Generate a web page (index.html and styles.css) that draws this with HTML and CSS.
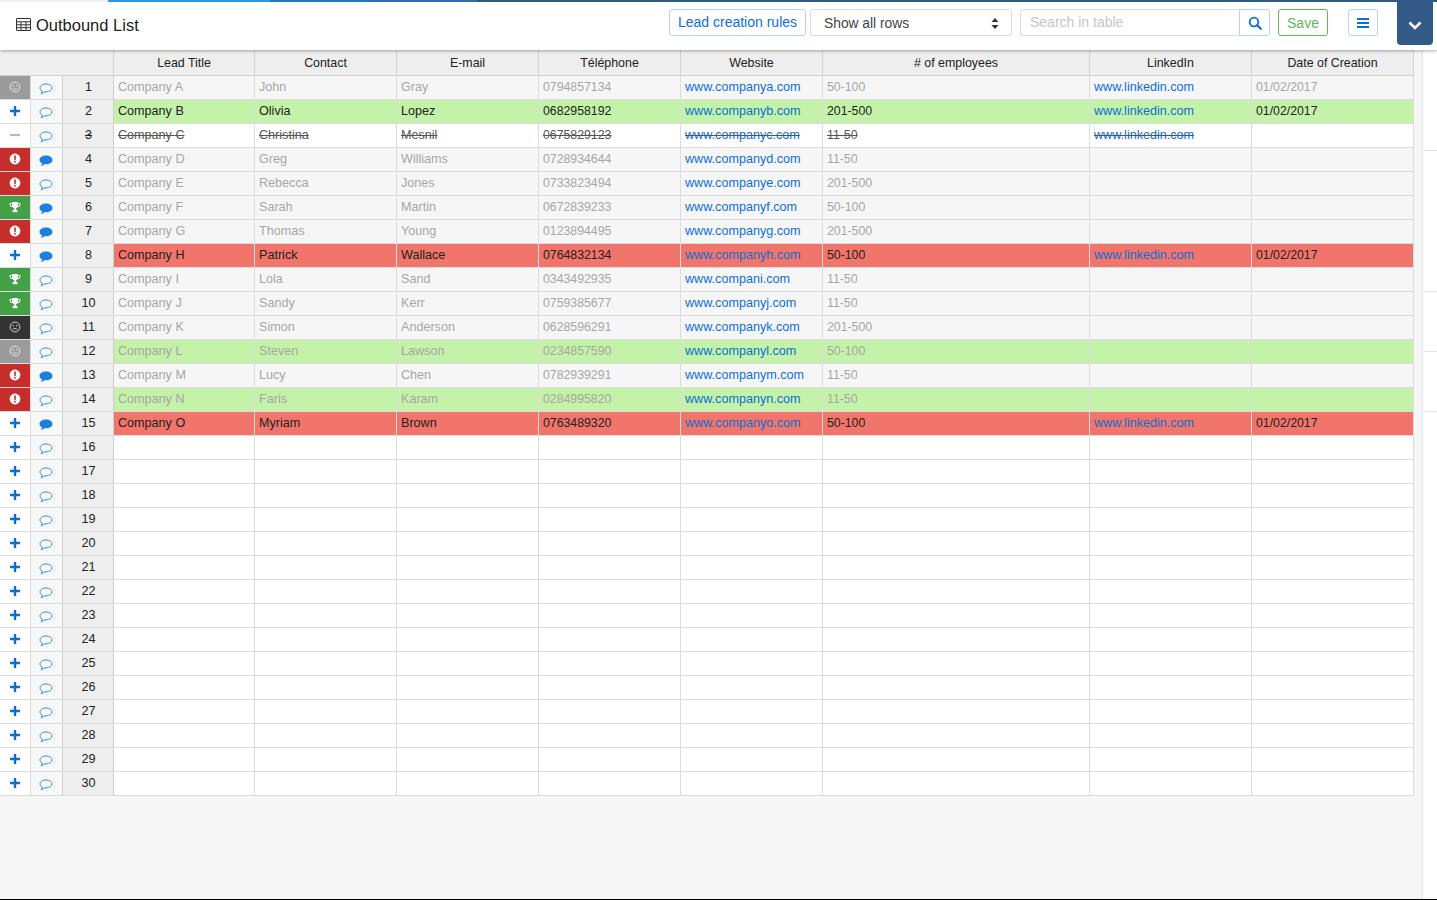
FILE: index.html
```html
<!DOCTYPE html>
<html lang="en">
<head>
<meta charset="utf-8">
<title>Outbound List</title>
<link rel="stylesheet" href="styles.css">
</head>
<body>
<svg class="defs" width="0" height="0" aria-hidden="true">
  <symbol id="i-smile" viewBox="0 0 12 12"><circle cx="6" cy="6" r="4.9" fill="none" stroke="currentColor" stroke-width="1"/><circle cx="4.2" cy="4.7" r=".8" fill="currentColor"/><circle cx="7.8" cy="4.7" r=".8" fill="currentColor"/><path d="M3.6 7.3c.9 1.4 3.9 1.4 4.8 0" fill="none" stroke="currentColor"/></symbol>
  <symbol id="i-frown" viewBox="0 0 12 12"><circle cx="6" cy="6" r="4.9" fill="none" stroke="currentColor" stroke-width="1"/><circle cx="4.2" cy="4.7" r=".8" fill="currentColor"/><circle cx="7.8" cy="4.7" r=".8" fill="currentColor"/><path d="M3.6 8.6c.9-1.4 3.9-1.4 4.8 0" fill="none" stroke="currentColor"/></symbol>
  <symbol id="i-alert" viewBox="0 0 12 12"><path fill-rule="evenodd" d="M6 .6a5.4 5.4 0 1 1 0 10.8A5.4 5.4 0 0 1 6 .6zM5.100 2.400l.2 4.900h1.400l.2-4.900zM5.200 8.100v1.500h1.600V8.100z" fill="currentColor"/></symbol>
  <symbol id="i-trophy" viewBox="0 0 12 12"><path d="M3 1h6v1h2.4v1.4c0 1.5-1.2 2.6-3 2.8-.4.6-1 1-1.5 1.2v1.4h1.4V10H4.200V8.400h1.400V7.400C5 7.200 4.400 6.800 4 6.200 1.900 6 .6 4.900.6 3.400V2H3zM1.600 3v.4c0 .9.7 1.600 1.800 1.800C3.200 4.500 3.100 3.800 3 3zM9 3c-.1.8-.2 1.500-.4 2.200 1.100-.2 1.800-.9 1.800-1.800V3z" fill="currentColor"/><rect x="3.500" y="9.800" width="5" height="1.400" fill="currentColor"/></symbol>
  <symbol id="i-plus" viewBox="0 0 10 10"><path d="M3.800 0h2.400v3.800H10v2.400H6.200V10H3.800V6.200H0V3.800h3.800z" fill="currentColor"/></symbol>
  <symbol id="i-minus" viewBox="0 0 10 10"><rect y="3.900" width="10" height="2.200" fill="currentColor"/></symbol>
  <symbol id="i-chat" viewBox="0 0 14 12"><path d="M7 1C3.700 1 1 2.700 1 4.900c0 1.300.9 2.400 2.300 3.100-.1.900-.6 1.900-1.100 2.600 1.300-.2 2.700-1 3.500-1.900.4.100.9.100 1.300.100 3.300 0 6-1.700 6-3.900S10.300 1 7 1z" fill="none" stroke="currentColor" stroke-width=".9"/></symbol>
  <symbol id="i-chatf" viewBox="0 0 14 12"><path d="M7 .6C3.400.6.500 2.500.5 4.900c0 1.400 1 2.600 2.500 3.400-.1 1-.6 1.900-1.200 2.800 1.500-.2 2.900-1 3.900-2 .4 0 .9.100 1.300.100 3.600 0 6.500-1.900 6.500-4.300S10.600.6 7 .6z" fill="currentColor"/></symbol>
</svg>

<header class="header">
  <div class="strip"><i class="s0"></i><i class="s1"></i><i class="s2"></i><i class="s3"></i><i class="s4"></i></div>
  <div class="bar">
    <h1 class="title"><svg class="grid-icon" viewBox="0 0 15 13" aria-hidden="true"><path d="M1 .5h13a.5.5 0 0 1 .5.5v11a.5.5 0 0 1-.5.5H1a.5.5 0 0 1-.5-.5V1A.5.5 0 0 1 1 .5zM.5 3.800h14M.5 6.800h14M.5 9.700h14M5 3.800v8.700M10 3.800v8.700" fill="none" stroke="currentColor"/></svg>Outbound List</h1>
    <div class="tools">
      <a class="btn btn-blue btn-rules">Lead creation rules</a>
      <div class="select"><span>Show all rows</span><svg class="updown" viewBox="0 0 8 11" aria-hidden="true"><path d="M4 0l3.500 4H.5zM4 11L.5 7h7z" fill="currentColor"/></svg></div>
      <div class="search">
        <input class="search-input" type="text" placeholder="Search in table">
        <a class="search-btn"><svg viewBox="0 0 14 14" aria-hidden="true"><circle cx="6" cy="6" r="4.300" fill="none" stroke="currentColor" stroke-width="1.800"/><path d="M9.200 9.200l3.600 3.600" stroke="currentColor" stroke-width="2.200" stroke-linecap="round"/></svg></a>
      </div>
      <a class="btn btn-save">Save</a>
      <a class="btn btn-blue btn-menu"><svg viewBox="0 0 12 10" aria-hidden="true"><path d="M0 0h12v2H0zM0 4h12v2H0zM0 8h12v2H0z" fill="currentColor"/></svg></a>
    </div>
  </div>
  <a class="tab"><svg viewBox="0 0 14 9" aria-hidden="true"><path d="M1.500 1.500L7 7l5.500-5.500" fill="none" stroke="currentColor" stroke-width="2.600"/></svg></a>
</header>

<div class="main">
  <div class="content">
    <table class="sheet">
      <colgroup><col class="c-status"><col class="c-note"><col class="c-num"><col class="c-std1"><col class="c-std"><col class="c-std"><col class="c-std"><col class="c-std"><col class="c-emp"><col class="c-wide"><col class="c-wide"></colgroup>
      <thead><tr><th></th><th></th><th class="th-num"></th><th>Lead Title</th><th>Contact</th><th>E-mail</th><th>Téléphone</th><th>Website</th><th># of employees</th><th>LinkedIn</th><th>Date of Creation</th></tr></thead>
      <tbody>
        <tr class="muted"><td class="st st-gray"><svg class="ic"><use href="#i-smile"/></svg></td><td class="nt"><svg class="cm"><use href="#i-chat"/></svg></td><td class="num">1</td><td>Company A</td><td>John</td><td>Gray</td><td>0794857134</td><td><a>www.companya.com</a></td><td>50-100</td><td><a>www.linkedin.com</a></td><td>01/02/2017</td></tr>
        <tr class="green"><td class="st st-add"><svg class="ic-s"><use href="#i-plus"/></svg></td><td class="nt"><svg class="cm"><use href="#i-chat"/></svg></td><td class="num">2</td><td>Company B</td><td>Olivia</td><td>Lopez</td><td>0682958192</td><td><a>www.companyb.com</a></td><td>201-500</td><td><a>www.linkedin.com</a></td><td>01/02/2017</td></tr>
        <tr class="struck"><td class="st st-del"><svg class="ic-s"><use href="#i-minus"/></svg></td><td class="nt"><svg class="cm"><use href="#i-chat"/></svg></td><td class="num">3</td><td>Company C</td><td>Christina</td><td>Mesnil</td><td>0675829123</td><td><a>www.companyc.com</a></td><td>11-50</td><td><a>www.linkedin.com</a></td><td></td></tr>
        <tr class="muted"><td class="st st-red"><svg class="ic"><use href="#i-alert"/></svg></td><td class="nt"><svg class="cm"><use href="#i-chatf"/></svg></td><td class="num">4</td><td>Company D</td><td>Greg</td><td>Williams</td><td>0728934644</td><td><a>www.companyd.com</a></td><td>11-50</td><td></td><td></td></tr>
        <tr class="muted"><td class="st st-red"><svg class="ic"><use href="#i-alert"/></svg></td><td class="nt"><svg class="cm"><use href="#i-chat"/></svg></td><td class="num">5</td><td>Company E</td><td>Rebecca</td><td>Jones</td><td>0733823494</td><td><a>www.companye.com</a></td><td>201-500</td><td></td><td></td></tr>
        <tr class="muted"><td class="st st-win"><svg class="ic"><use href="#i-trophy"/></svg></td><td class="nt"><svg class="cm"><use href="#i-chatf"/></svg></td><td class="num">6</td><td>Company F</td><td>Sarah</td><td>Martin</td><td>0672839233</td><td><a>www.companyf.com</a></td><td>50-100</td><td></td><td></td></tr>
        <tr class="muted"><td class="st st-red"><svg class="ic"><use href="#i-alert"/></svg></td><td class="nt"><svg class="cm"><use href="#i-chatf"/></svg></td><td class="num">7</td><td>Company G</td><td>Thomas</td><td>Young</td><td>0123894495</td><td><a>www.companyg.com</a></td><td>201-500</td><td></td><td></td></tr>
        <tr class="red"><td class="st st-add"><svg class="ic-s"><use href="#i-plus"/></svg></td><td class="nt"><svg class="cm"><use href="#i-chatf"/></svg></td><td class="num">8</td><td>Company H</td><td>Patrick</td><td>Wallace</td><td>0764832134</td><td><a>www.companyh.com</a></td><td>50-100</td><td><a>www.linkedin.com</a></td><td>01/02/2017</td></tr>
        <tr class="muted"><td class="st st-win"><svg class="ic"><use href="#i-trophy"/></svg></td><td class="nt"><svg class="cm"><use href="#i-chat"/></svg></td><td class="num">9</td><td>Company I</td><td>Lola</td><td>Sand</td><td>0343492935</td><td><a>www.compani.com</a></td><td>11-50</td><td></td><td></td></tr>
        <tr class="muted"><td class="st st-win"><svg class="ic"><use href="#i-trophy"/></svg></td><td class="nt"><svg class="cm"><use href="#i-chat"/></svg></td><td class="num">10</td><td>Company J</td><td>Sandy</td><td>Kerr</td><td>0759385677</td><td><a>www.companyj.com</a></td><td>11-50</td><td></td><td></td></tr>
        <tr class="muted"><td class="st st-dark"><svg class="ic"><use href="#i-frown"/></svg></td><td class="nt"><svg class="cm"><use href="#i-chat"/></svg></td><td class="num">11</td><td>Company K</td><td>Simon</td><td>Anderson</td><td>0628596291</td><td><a>www.companyk.com</a></td><td>201-500</td><td></td><td></td></tr>
        <tr class="muted green"><td class="st st-gray"><svg class="ic"><use href="#i-smile"/></svg></td><td class="nt"><svg class="cm"><use href="#i-chat"/></svg></td><td class="num">12</td><td>Company L</td><td>Steven</td><td>Lawson</td><td>0234857590</td><td><a>www.companyl.com</a></td><td>50-100</td><td></td><td></td></tr>
        <tr class="muted"><td class="st st-red"><svg class="ic"><use href="#i-alert"/></svg></td><td class="nt"><svg class="cm"><use href="#i-chatf"/></svg></td><td class="num">13</td><td>Company M</td><td>Lucy</td><td>Chen</td><td>0782939291</td><td><a>www.companym.com</a></td><td>11-50</td><td></td><td></td></tr>
        <tr class="muted green"><td class="st st-red"><svg class="ic"><use href="#i-alert"/></svg></td><td class="nt"><svg class="cm"><use href="#i-chat"/></svg></td><td class="num">14</td><td>Company N</td><td>Faris</td><td>Karam</td><td>0284995820</td><td><a>www.companyn.com</a></td><td>11-50</td><td></td><td></td></tr>
        <tr class="red"><td class="st st-add"><svg class="ic-s"><use href="#i-plus"/></svg></td><td class="nt"><svg class="cm"><use href="#i-chatf"/></svg></td><td class="num">15</td><td>Company O</td><td>Myriam</td><td>Brown</td><td>0763489320</td><td><a>www.companyo.com</a></td><td>50-100</td><td><a>www.linkedin.com</a></td><td>01/02/2017</td></tr>
        <tr class="empty"><td class="st st-add"><svg class="ic-s"><use href="#i-plus"/></svg></td><td class="nt"><svg class="cm"><use href="#i-chat"/></svg></td><td class="num">16</td><td></td><td></td><td></td><td></td><td></td><td></td><td></td><td></td></tr>
        <tr class="empty"><td class="st st-add"><svg class="ic-s"><use href="#i-plus"/></svg></td><td class="nt"><svg class="cm"><use href="#i-chat"/></svg></td><td class="num">17</td><td></td><td></td><td></td><td></td><td></td><td></td><td></td><td></td></tr>
        <tr class="empty"><td class="st st-add"><svg class="ic-s"><use href="#i-plus"/></svg></td><td class="nt"><svg class="cm"><use href="#i-chat"/></svg></td><td class="num">18</td><td></td><td></td><td></td><td></td><td></td><td></td><td></td><td></td></tr>
        <tr class="empty"><td class="st st-add"><svg class="ic-s"><use href="#i-plus"/></svg></td><td class="nt"><svg class="cm"><use href="#i-chat"/></svg></td><td class="num">19</td><td></td><td></td><td></td><td></td><td></td><td></td><td></td><td></td></tr>
        <tr class="empty"><td class="st st-add"><svg class="ic-s"><use href="#i-plus"/></svg></td><td class="nt"><svg class="cm"><use href="#i-chat"/></svg></td><td class="num">20</td><td></td><td></td><td></td><td></td><td></td><td></td><td></td><td></td></tr>
        <tr class="empty"><td class="st st-add"><svg class="ic-s"><use href="#i-plus"/></svg></td><td class="nt"><svg class="cm"><use href="#i-chat"/></svg></td><td class="num">21</td><td></td><td></td><td></td><td></td><td></td><td></td><td></td><td></td></tr>
        <tr class="empty"><td class="st st-add"><svg class="ic-s"><use href="#i-plus"/></svg></td><td class="nt"><svg class="cm"><use href="#i-chat"/></svg></td><td class="num">22</td><td></td><td></td><td></td><td></td><td></td><td></td><td></td><td></td></tr>
        <tr class="empty"><td class="st st-add"><svg class="ic-s"><use href="#i-plus"/></svg></td><td class="nt"><svg class="cm"><use href="#i-chat"/></svg></td><td class="num">23</td><td></td><td></td><td></td><td></td><td></td><td></td><td></td><td></td></tr>
        <tr class="empty"><td class="st st-add"><svg class="ic-s"><use href="#i-plus"/></svg></td><td class="nt"><svg class="cm"><use href="#i-chat"/></svg></td><td class="num">24</td><td></td><td></td><td></td><td></td><td></td><td></td><td></td><td></td></tr>
        <tr class="empty"><td class="st st-add"><svg class="ic-s"><use href="#i-plus"/></svg></td><td class="nt"><svg class="cm"><use href="#i-chat"/></svg></td><td class="num">25</td><td></td><td></td><td></td><td></td><td></td><td></td><td></td><td></td></tr>
        <tr class="empty"><td class="st st-add"><svg class="ic-s"><use href="#i-plus"/></svg></td><td class="nt"><svg class="cm"><use href="#i-chat"/></svg></td><td class="num">26</td><td></td><td></td><td></td><td></td><td></td><td></td><td></td><td></td></tr>
        <tr class="empty"><td class="st st-add"><svg class="ic-s"><use href="#i-plus"/></svg></td><td class="nt"><svg class="cm"><use href="#i-chat"/></svg></td><td class="num">27</td><td></td><td></td><td></td><td></td><td></td><td></td><td></td><td></td></tr>
        <tr class="empty"><td class="st st-add"><svg class="ic-s"><use href="#i-plus"/></svg></td><td class="nt"><svg class="cm"><use href="#i-chat"/></svg></td><td class="num">28</td><td></td><td></td><td></td><td></td><td></td><td></td><td></td><td></td></tr>
        <tr class="empty"><td class="st st-add"><svg class="ic-s"><use href="#i-plus"/></svg></td><td class="nt"><svg class="cm"><use href="#i-chat"/></svg></td><td class="num">29</td><td></td><td></td><td></td><td></td><td></td><td></td><td></td><td></td></tr>
        <tr class="empty"><td class="st st-add"><svg class="ic-s"><use href="#i-plus"/></svg></td><td class="nt"><svg class="cm"><use href="#i-chat"/></svg></td><td class="num">30</td><td></td><td></td><td></td><td></td><td></td><td></td><td></td><td></td></tr>
      </tbody>
    </table>
  </div>
  <aside class="rail">
    <div class="rail-a"></div><div class="rail-b"></div><div class="rail-c"></div><div class="rail-c"></div>
  </aside>
</div>
<div class="baseline"></div>
</body>
</html>
```

FILE: styles.css
```css
* { box-sizing: border-box; }
html, body { margin: 0; height: 100%; }
body {
  display: flex;
  flex-direction: column;
  height: 900px;
  overflow: hidden;
  background: #f6f6f6;
  color: #222;
  font-family: "Liberation Sans", Arial, sans-serif;
  font-size: 12.6px;
}
.defs { position: absolute; }

/* header */
.header {
  position: relative;
  z-index: 2;
  flex: none;
  height: 50px;
  background: #fff;
  box-shadow: 0 1px 3px rgba(0, 0, 0, .32);
}
.strip { display: flex; height: 2px; }
.strip i { display: block; }
.s0 { width: 108px; background: #f0f0f0; }
.s1 { width: 162px; background: #2d96e8; }
.s2 { width: 102px; background: #1f78c0; }
.s3 { width: 105px; background: #2f6cb0; }
.s4 { flex: 1; background: #2f5a86; }
.bar {
  display: flex;
  justify-content: space-between;
  align-items: flex-start;
  padding: 7px 59px 0 16px;
}
.title {
  display: flex;
  align-items: center;
  gap: 5px;
  margin: 6px 0 0;
  color: #222;
  font-size: 16.5px;
  font-weight: 400;
  line-height: 20px;
}
.grid-icon { width: 15px; height: 13px; margin-top: -1px; color: #333; }
.tools { display: flex; }
.btn {
  display: flex;
  align-items: center;
  justify-content: center;
  height: 27px;
  border: 1px solid;
  border-radius: 3px;
  font-size: 14px;
  background: #fff;
}
.btn-blue { border-color: #b4d3ee; color: #0b6fd6; }
.btn-rules { width: 137px; padding-bottom: 2px; }
.select {
  display: flex;
  align-items: center;
  justify-content: space-between;
  width: 202px;
  height: 27px;
  margin-left: 4px;
  padding: 1px 12px 0 13px;
  border: 1px solid #dcdcdc;
  border-radius: 3px;
  color: #444;
  font-size: 13.8px;
}
.updown { width: 8px; height: 11px; color: #333; }
.search { display: flex; margin-left: 8px; }
.search-input {
  width: 219px;
  height: 27px;
  padding: 0 0 2px 9px;
  border: 1px solid #dcdcdc;
  border-right: 0;
  border-radius: 3px 0 0 3px;
  outline: 0;
  font: 14px "Liberation Sans", Arial, sans-serif;
}
.search-input::placeholder { color: #c6c6c6; opacity: 1; }
.search-btn {
  display: flex;
  align-items: center;
  justify-content: center;
  width: 31px;
  height: 27px;
  border: 1px solid #b4d3ee;
  border-radius: 0 3px 3px 0;
  color: #0b6fd6;
}
.search-btn svg { width: 14px; height: 14px; }
.btn-save { width: 50px; margin-left: 8px; border-color: #5cb85c; color: #5cb85c; }
.btn-menu { width: 30px; margin-left: 20px; }
.btn-menu svg { width: 12px; height: 10px; }
.tab {
  position: absolute;
  top: 0;
  left: 1397px;
  display: flex;
  align-items: center;
  justify-content: center;
  width: 36px;
  height: 45px;
  padding-top: 6px;
  border-radius: 0 0 4px 4px;
  background: #335a87;
  color: #fff;
}
.tab svg { width: 14px; height: 9px; }

/* main area */
.main { display: flex; flex: 1; min-height: 0; }
.content { width: 1423px; flex: none; }
.sheet {
  width: 1414px;
  table-layout: fixed;
  border-collapse: separate;
  border-spacing: 0;
  background: #fff;
}
.c-status { width: 31px; }
.c-note { width: 32px; }
.c-num { width: 51px; }
.c-std1 { width: 141px; }
.c-std { width: 142px; }
.c-emp { width: 267px; }
.c-wide { width: 162px; }

.sheet th, .sheet td {
  overflow: hidden;
  border-right: 1px solid #dcdcdc;
  border-bottom: 1px solid #dcdcdc;
  white-space: nowrap;
}
.sheet th {
  height: 26px;
  padding: 1px 0 0;
  border-color: #d2d2d2;
  background: #eeeeee;
  color: #222;
  font-size: 12.4px;
  font-weight: 400;
  text-align: center;
}
.sheet th:nth-child(-n+2) { border-right-color: #eeeeee; }
.sheet td {
  height: 24px;
  padding: 0 4px 2px;
  color: #222;
}
.sheet td:nth-child(7), .sheet td:nth-child(9), .sheet td:nth-child(11) { font-size: 12.3px; }
.sheet a { color: #0b6fd6; }

.sheet .st { padding: 0 0 2px; background: #fff; text-align: center; line-height: 0; }
.sheet .nt { padding: 0 1px 0 0; background: #f8f8f8; color: #1a7fe0; text-align: center; line-height: 0; border-right-color: #cfcfcf; }
.sheet .num { padding: 0 0 2px 1px; background: #eeeeee; color: #222; text-align: center; border-right-color: #cfcfcf; }
.ic { width: 12px; height: 12px; vertical-align: middle; }
.ic-s { width: 10px; height: 10px; vertical-align: middle; }
.cm { width: 14px; height: 12px; margin-top: 3px; vertical-align: middle; }

.sheet .st-gray { background: #9b9b9b; color: #e4e4e4; }
.sheet .st-dark { background: #333333; color: #c8c8c8; }
.sheet .st-red { background: #c62e2c; color: #fff; }
.sheet .st-win { background: #43a047; color: #fff; }
.sheet .st-add { color: #0b6fd6; }
.sheet .st-del { color: #b8b8b8; }

.muted td { background: #f6f6f6; color: #a6a6a6; }
.green td { background: #c3f2a8; }
.red td { background: #f1756a; }
.struck td { text-decoration: line-through; color: #555; }
.struck .num { text-decoration: line-through; }
.muted .num { color: #222; }

/* right rail */
.rail {
  flex: 1;
  display: flex;
  flex-direction: column;
  background: #fff;
  box-shadow: -1px 0 1px rgba(0, 0, 0, .06);
  padding-left: 1px;
}
.rail div { border-bottom: 1px solid #e6e6e6; }
.rail-a { height: 101px; }
.rail-b { height: 141px; }
.rail-c { height: 60px; }
.baseline { flex: none; height: 1px; background: #000; }
```
